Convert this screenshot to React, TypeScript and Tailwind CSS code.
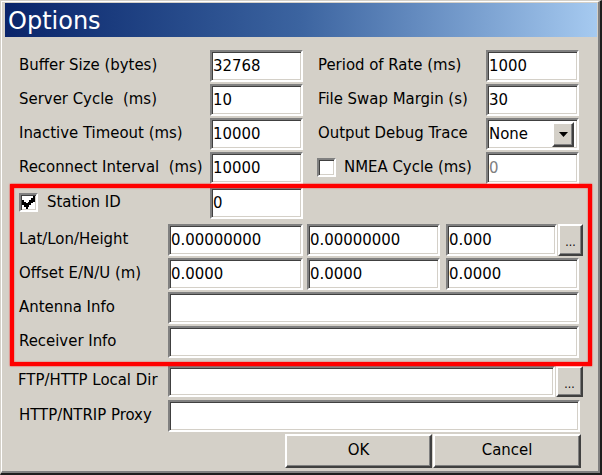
import clsx from 'clsx';

// Win classic borders
const sunken =
  'border-2 border-t-[#808080] border-l-[#808080] border-r-white border-b-white shadow-[inset_1px_1px_0_#404040,inset_-1px_-1px_0_#d4d0c8]';
const raised =
  'bg-[#d4d0c8] border-2 border-t-white border-l-white border-r-[#404040] border-b-[#404040] shadow-[inset_-1px_-1px_0_#808080]';

function Edit({ className, value, disabled }: { className: string; value?: string; disabled?: boolean }) {
  return (
    <div
      className={clsx(
        'flex items-center bg-white pl-[1px] whitespace-pre',
        sunken,
        disabled ? 'text-[#808080]' : 'text-black',
        className,
      )}
    >
      {value}
    </div>
  );
}

function Label({ className, children }: { className: string; children: React.ReactNode }) {
  return <div className={clsx('whitespace-pre pb-[2px] shrink-0', className)}>{children}</div>;
}

function Check({ checked }: { checked?: boolean }) {
  return (
    <div className={clsx('w-[19px] h-[19px] bg-white flex items-center justify-center shrink-0', sunken)}>
      {checked && (
        <svg width="13" height="13" viewBox="0 0 7 7" shapeRendering="crispEdges">
          <path
            d="M6 0h1v1h-1zM5 1h2v1h-2zM0 2h1v1h-1zM4 2h3v1h-3zM0 3h2v1h-2zM3 3h3v1h-3zM0 4h5v1h-5zM1 5h3v1h-3zM2 6h1v1h-1z"
            fill="#000"
          />
        </svg>
      )}
    </div>
  );
}

function Dots({ className }: { className: string }) {
  return (
    <div className={clsx('flex items-center justify-center text-[12px] leading-none pt-[4px]', raised, className)}>
      ...
    </div>
  );
}

export default function App() {
  return (
    <div className="w-[602px] h-[475px] relative bg-[#d4d0c8] border-t border-l border-t-[#d4d0c8] border-l-[#d4d0c8] border-r-2 border-b-2 border-r-[#1e1e1e] border-b-[#1e1e1e] font-['DejaVu_Sans_Condensed','DejaVu_Sans',sans-serif] text-[16.6px] text-black">
      <div className="h-full border border-white border-r-2 border-b-2 border-r-[#808080] border-b-[#808080] pt-px pl-[3px] pr-px">
        <div className="h-[34px] flex items-center pl-[3px] pt-[2px] bg-linear-to-r from-[#0a246a] via-[#3c64a0] to-[#a6caf0] text-white text-[24px] font-['DejaVu_Sans',sans-serif]">
          Options
        </div>

        <div className="pl-[14px] pt-[13px]">
          {/* general settings */}
          <div className="flex items-center h-[32px]">
            <Label className="w-[191px]">Buffer Size (bytes)</Label>
            <Edit className="w-[93px] h-[32px]" value="32768" />
            <Label className="w-[168px] ml-[15px]">Period of Rate (ms)</Label>
            <Edit className="w-[93px] h-[32px]" value="1000" />
          </div>
          <div className="flex items-center h-[32px] mt-[2px]">
            <Label className="w-[191px]">Server Cycle  (ms)</Label>
            <Edit className="w-[93px] h-[32px]" value="10" />
            <Label className="w-[168px] ml-[15px]">File Swap Margin (s)</Label>
            <Edit className="w-[93px] h-[32px]" value="30" />
          </div>
          <div className="flex items-center h-[32px] mt-[2px]">
            <Label className="w-[191px]">Inactive Timeout (ms)</Label>
            <Edit className="w-[93px] h-[32px]" value="10000" />
            <Label className="w-[168px] ml-[15px]">Output Debug Trace</Label>
            <div className={clsx('w-[93px] h-[32px] flex items-center bg-white', sunken)}>
              <span className="flex-1 pl-[1px]">None</span>
              <div className={clsx('w-[22px] h-[25px] mr-[3px] flex items-center justify-center', raised)}>
                <svg width="9" height="5" viewBox="0 0 9 5">
                  <path d="M0 0h9L4.5 5z" fill="#000" />
                </svg>
              </div>
            </div>
          </div>
          <div className="flex items-center h-[32px] mt-[2px]">
            <Label className="w-[191px]">Reconnect Interval  (ms)</Label>
            <Edit className="w-[93px] h-[32px]" value="10000" />
            <div className="w-[168px] ml-[14px] flex items-center">
              <Check />
              <Label className="ml-[8px]">NMEA Cycle (ms)</Label>
            </div>
            <Edit className="w-[93px] h-[32px] ml-px" value="0" disabled />
          </div>

          {/* station */}
          <div className="flex items-center h-[32px] mt-[3px]">
            <div className="w-[191px] flex items-center">
              <Check checked />
              <Label className="ml-[9px]">Station ID</Label>
            </div>
            <Edit className="w-[93px] h-[32px]" value="0" />
          </div>
          <div className="flex items-center h-[32px] mt-[5px]">
            <Label className="w-[149px]">Lat/Lon/Height</Label>
            <Edit className="w-[135px] h-[32px]" value="0.00000000" />
            <Edit className="w-[133px] h-[32px] ml-[4px]" value="0.00000000" />
            <Edit className="w-[111px] h-[32px] ml-[6px]" value="0.000" />
            <Dots className="w-[25px] h-[32px] ml-[1px]" />
          </div>
          <div className="flex items-center h-[32px] mt-[2px]">
            <Label className="w-[149px]">Offset E/N/U (m)</Label>
            <Edit className="w-[135px] h-[32px]" value="0.0000" />
            <Edit className="w-[133px] h-[32px] ml-[4px]" value="0.0000" />
            <Edit className="w-[133px] h-[32px] ml-[6px]" value="0.0000" />
          </div>
          <div className="flex items-center h-[32px] mt-[2px]">
            <Label className="w-[149px]">Antenna Info</Label>
            <Edit className="w-[411px] h-[32px]" />
          </div>
          <div className="flex items-center h-[32px] mt-[2px]">
            <Label className="w-[149px]">Receiver Info</Label>
            <Edit className="w-[411px] h-[32px]" />
          </div>

          {/* paths */}
          <div className="flex items-center h-[31px] mt-[8px]">
            <Label className="w-[149px] -ml-px">FTP/HTTP Local Dir</Label>
            <Edit className="w-[387px] h-[31px] ml-px" />
            <Dots className="w-[27px] h-[31px] ml-px" />
          </div>
          <div className="flex items-center h-[32px] mt-[3px]">
            <Label className="w-[149px]">HTTP/NTRIP Proxy</Label>
            <Edit className="w-[412px] h-[32px]" />
          </div>

          <div className="flex h-[34px] mt-[2px] pl-[266px]">
            <div className={clsx('w-[147px] h-[34px] flex items-center justify-center pb-px', raised)}>OK</div>
            <div className={clsx('w-[148px] h-[34px] ml-px flex items-center justify-center pb-px', raised)}>Cancel</div>
          </div>
        </div>
      </div>

      {/* red highlight drawn over the station block */}
      <div className="absolute left-[9px] top-[183px] w-[582px] h-[182px] border-4 border-[#ff0000] shadow-[0_0_1.5px_#ff0000,inset_0_0_1.5px_#ff0000] pointer-events-none" />
    </div>
  );
}
